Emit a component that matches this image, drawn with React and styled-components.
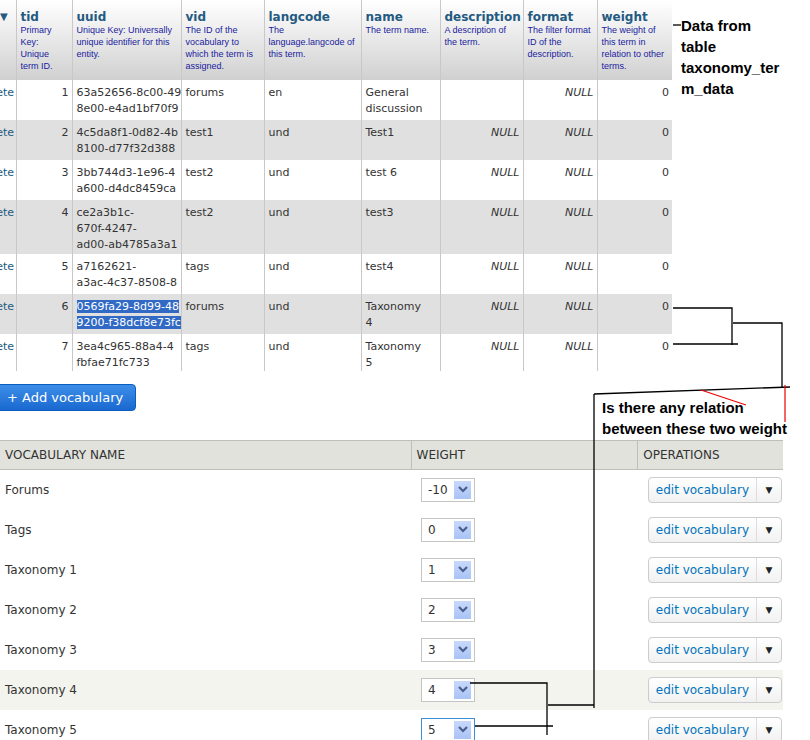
import React from "react";
import styled, { createGlobalStyle } from "styled-components";

const Global = createGlobalStyle`
  body { margin: 0; background: #fff; font-family: "DejaVu Sans", sans-serif; }
`;
const Page = styled.div`position: relative; width: 810px; height: 740px; overflow: hidden;`;
const Top = styled.div`display: flex; align-items: flex-start; margin-left: -26px;`;
const Grid = styled.table`
  border-collapse: collapse; table-layout: fixed; width: 698px; font-size: 11px; color: #333;
  td, th { border-left: 1px solid #c8c8c8; vertical-align: top; }
`;
const Th = styled.th`
  height: 80px; text-align: left; padding: 10px 3px 0 4px; box-sizing: border-box;
  background: linear-gradient(#fff, #d0d0d0); font-weight: normal; width: ${p => p.w}px;
  b { display: block; color: #235a81; font-size: 12px; line-height: 14px; }
  span { display: block; color: #1a1aa0; font: 9px/12px "Liberation Sans", sans-serif; }
`;
const Row = styled.tr`background: ${p => (p.g ? "#e0e0e0" : "#fff")}; height: ${p => p.h}px;`;
const Td = styled.td`
  padding: 5px 3px 0 4px; line-height: 16px; text-align: ${p => (p.r ? "right" : "left")};
  font-style: ${p => (p.i ? "italic" : "normal")}; white-space: nowrap; overflow: hidden;
  color: ${p => p.c || "#333"};
`;
const Sel = styled.span`background: #316ac5; color: #fff;`;
const Note = styled.div`font: bold 15px/21px "Liberation Sans", Arial, sans-serif; color: #000;`;
const AddBtn = styled.button`
  margin: 13px 0 0 -10px; width: 146px; height: 27px; border-radius: 4px; border: 1px solid #0a5ec0;
  background: linear-gradient(#3d8ee8, #1a68d0); color: #fff; font: 13px "DejaVu Sans", sans-serif;
  text-align: left; padding-left: 16px;
`;
const Voc = styled.table`
  margin-top: 29px; border-collapse: collapse; width: 783px; font: 12px "DejaVu Sans", sans-serif; color: #333;
`;
const VH = styled.th`
  background: #e1e2dc; border-top: 1px solid #bfbfba; border-bottom: 1px solid #bfbfba;
  border-left: ${p => (p.first ? "none" : "1px solid #bfbfba")};
  height: 26px; text-align: left; font-weight: normal; padding-left: 5px; width: ${p => p.w}px;
`;
const VRow = styled.tr`height: 40px; background: ${p => (p.hl ? "#f3f4ee" : "#fff")};`;
const VTd = styled.td`padding-left: ${p => p.pl || 5}px; white-space: nowrap;`;
const Select = styled.div`
  width: 54px; height: 24px; border: 1px solid ${p => (p.focus ? "#3a8fd4" : "#c4c4c4")};
  display: flex; align-items: center; justify-content: space-between; padding-left: 6px; box-sizing: border-box; background: #fff;
`;
const Arrow = styled.span`
  width: 17px; height: 18px; margin-right: 3px; background: linear-gradient(#c8d8fb, #a9c3f6);
  display: flex; align-items: center; justify-content: center;
`;
const Split = styled.div`
  display: inline-flex; height: 24px; border: 1px solid #ccc; border-radius: 4px; white-space: nowrap;
  background: linear-gradient(#fff, #f1f1f1); color: #0074bd; align-items: stretch;
  span { padding: 0 7px 0 7px; display: flex; align-items: center; }
  i { border-left: 1px solid #ddd; width: 24px; display: flex; align-items: center; justify-content: center; color: #222; font-style: normal; font-size: 9px; }
`;
const Overlay = styled.svg`position: absolute; left: 0; top: 0; pointer-events: none;`;
const Abs = styled.div`position: absolute; left: ${p => p.x}px; top: ${p => p.y}px; width: ${p => p.w}px;`;

const rows = [
  [1, "63a52656-8c00-49", "8e00-e4ad1bf70f9", "forums", "en", "General", "discussion", "", 40],
  [2, "4c5da8f1-0d82-4b", "8100-d77f32d388", "test1", "und", "Test1", "", "NULL", 40],
  [3, "3bb744d3-1e96-4", "a600-d4dc8459ca", "test2", "und", "test 6", "", "NULL", 40],
  [4, "ce2a3b1c-", "670f-4247-", "test2", "und", "test3", "", "NULL", 54],
  [5, "a7162621-", "a3ac-4c37-8508-8", "tags", "und", "test4", "", "NULL", 40],
  [6, "0569fa29-8d99-48", "9200-f38dcf8e73fc", "forums", "und", "Taxonomy", "4", "NULL", 40],
  [7, "3ea4c965-88a4-4", "fbfae71fc733", "tags", "und", "Taxonomy", "5", "NULL", 34],
];
const vocs = ["Forums", "Tags", "Taxonomy 1", "Taxonomy 2", "Taxonomy 3", "Taxonomy 4", "Taxonomy 5"];
const w = ["-10", "0", "1", "2", "3", "4", "5"];

const Chev = () => (
  <svg width="10" height="7" viewBox="0 0 10 7"><path d="M1 1l4 4 4-4" stroke="#4a5e8c" strokeWidth="2.2" fill="none" /></svg>
);

export default function App() {
  return (
    <Page>
      <Global />
      <Top>
        <Grid>
          <colgroup>
            {[42, 56, 109, 83, 97, 79, 83, 74, 75].map((c, i) => <col key={i} style={{ width: c }} />)}
          </colgroup>
          <thead>
            <tr>
              <Th style={{ borderLeft: "none" }}><b style={{ paddingLeft: 22, fontSize: 10 }}>▼</b></Th>
              <Th><b>tid</b><span>Primary Key: Unique term ID.</span></Th>
              <Th><b>uuid</b><span>Unique Key: Universally unique identifier for this entity.</span></Th>
              <Th><b>vid</b><span>The ID of the vocabulary to which the term is assigned.</span></Th>
              <Th><b>langcode</b><span>The language.langcode of this term.</span></Th>
              <Th><b>name</b><span>The term name.</span></Th>
              <Th><b>description</b><span>A description of the term.</span></Th>
              <Th><b>format</b><span>The filter format ID of the description.</span></Th>
              <Th><b>weight</b><span>The weight of this term in relation to other terms.</span></Th>
            </tr>
          </thead>
          <tbody>
            {rows.map((r, i) => (
              <Row key={i} g={i % 2 === 1} h={r[8]}>
                <Td style={{ borderLeft: "none" }} c="#235a81">Delete</Td>
                <Td r>{r[0]}</Td>
                <Td>
                  {i === 5 ? <><Sel>{r[1]}</Sel><br /><Sel>{r[2]}</Sel></> : <>{r[1]}<br />{r[2]}{i === 3 && <><br />ad00-ab4785a3a1</>}</>}
                </Td>
                <Td>{r[3]}</Td>
                <Td>{r[4]}</Td>
                <Td>{r[5]}{r[6] && <><br />{r[6]}</>}</Td>
                <Td r i>{i === 0 ? "" : "NULL"}</Td>
                <Td r i>NULL</Td>
                <Td r>0</Td>
              </Row>
            ))}
          </tbody>
        </Grid>
      </Top>
      <AddBtn>+ Add vocabulary</AddBtn>
      <Voc>
        <thead>
          <tr>
            <VH first w={405}>VOCABULARY NAME</VH>
            <VH w={220}>WEIGHT</VH>
            <VH>OPERATIONS</VH>
          </tr>
        </thead>
        <tbody>
          {vocs.map((v, i) => (
            <VRow key={v} hl={i === 5}>
              <VTd>{v}</VTd>
              <VTd pl={10}>
                <Select focus={i === 6}>{w[i]}<Arrow><Chev /></Arrow></Select>
              </VTd>
              <VTd pl={10}>
                <Split><span>edit vocabulary</span><i>▼</i></Split>
              </VTd>
            </VRow>
          ))}
        </tbody>
      </Voc>
      <Abs x={681} y={15} w={100}><Note>Data from table taxonomy_ter m_data</Note></Abs>
      <Abs x={602} y={397} w={205}><Note>Is there any relation between these two weight</Note></Abs>
      <Overlay width="810" height="740">
        <g stroke="#000" strokeWidth="1.3" fill="none">
          <path d="M673 25H681" />
          <path d="M673 308H732V345M673 344H738M733 323H782V388" />
          <path d="M594 394L790 387M594 394V708" />
          <path d="M470 683H547V735M548 705H594M475 726H553" />
        </g>
        <g stroke="#e00" strokeWidth="1.2">
          <path d="M701 390L746 405M785 385V422" />
        </g>
      </Overlay>
    </Page>
  );
}
